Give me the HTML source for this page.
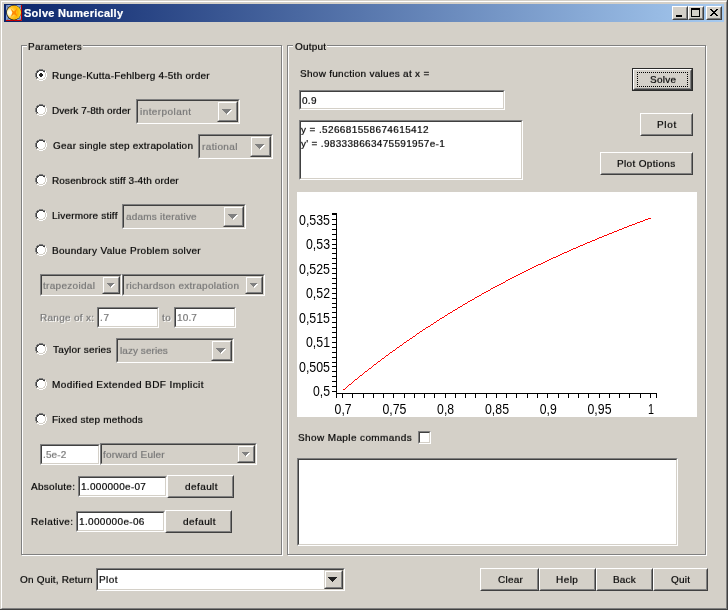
<!DOCTYPE html><html><head><meta charset="utf-8"><title>Solve Numerically</title><style>
html,body{margin:0;padding:0;}
body{width:728px;height:610px;overflow:hidden;background:#d4d0c8;font-family:"Liberation Sans",sans-serif;font-size:10px;color:#000;position:relative;}
.a{position:absolute;white-space:nowrap;}
.t{position:absolute;white-space:pre;line-height:12px;height:12px;-webkit-text-stroke:0.2px currentColor;will-change:transform;}
.s{transform:scaleY(0.875);transform-origin:0 9px;}
.dis{color:#767676;}
.emb{color:#767676;text-shadow:1px 1px 0 #fff;}
.grp{position:absolute;border:1px solid #808080;box-shadow:1px 1px 0 #fff, inset 1px 1px 0 #fff;box-sizing:border-box;}
.grplab{position:absolute;background:#d4d0c8;height:12px;}
.sunk{position:absolute;box-sizing:border-box;border:1px solid;border-color:#808080 #fff #fff #808080;background:#fff;}
.sunk:before{content:"";position:absolute;left:0;top:0;right:0;bottom:0;border:1px solid;border-color:#404040 #d4d0c8 #d4d0c8 #404040;}
.sunk.g{background:#d4d0c8;}
.btn{position:absolute;box-sizing:border-box;border:1px solid;border-color:#fff #404040 #404040 #fff;background:#d4d0c8;}
.btn:before{content:"";position:absolute;left:0;top:0;right:0;bottom:0;border:1px solid;border-color:#d4d0c8 #808080 #808080 #d4d0c8;}
.cbtn{position:absolute;box-sizing:border-box;border:1px solid;border-color:#d4d0c8 #404040 #404040 #d4d0c8;background:#d4d0c8;}
.cbtn:before{content:"";position:absolute;left:0;top:0;right:0;bottom:0;border:1px solid;border-color:#fff #808080 #808080 #fff;}
.radio{position:absolute;width:12px;height:12px;}
</style></head><body>
<div class="a" style="left:0;top:0;width:727px;height:609px;border-right:1px solid #404040;border-bottom:1px solid #404040;"></div>
<div class="a" style="left:1px;top:1px;width:726px;height:608px;border:1px solid;border-color:#fff #808080 #808080 #fff;box-sizing:border-box;"></div>
<div class="a" style="left:4px;top:4px;width:720px;height:18px;background:linear-gradient(to right,#0a246a,#a6caf0);"></div>
<svg class="a" style="left:6px;top:5px" width="16" height="16" viewBox="0 0 16 16"><defs><radialGradient id="ig" cx="0.2" cy="0.5" r="0.8"><stop offset="0" stop-color="#ffffff"/><stop offset="0.22" stop-color="#fff6c0"/><stop offset="0.45" stop-color="#ffc830"/><stop offset="0.7" stop-color="#ffb400"/><stop offset="1" stop-color="#f4dc30"/></radialGradient></defs><rect x="0" y="0" width="16" height="16" fill="#86a3dc"/><path d="M0 0L16 16M16 0L0 16" stroke="#6f7f9c" stroke-width="1.2"/><path d="M15.5 0V15.5H0" stroke="#c80000" stroke-width="1" fill="none"/><circle cx="7.7" cy="7.6" r="7.6" fill="#1a1a1a"/><circle cx="8" cy="7.6" r="7.1" fill="url(#ig)"/><path d="M4.6 3.4L8 6.4 11.2 3.2 9.8 7.6 11.6 11.6 8 9.2 4.8 12 6.4 7.6z" fill="#ff8a00"/></svg>
<div class="t " style="left:23.76px;top:7px;letter-spacing:0.268px;font-size:11px;line-height:13px;height:13px;font-weight:bold;color:#fff;">Solve Numerically</div>
<div class="btn" style="left:672px;top:6px;width:16px;height:14px;">
<div class="a" style="left:3px;top:8px;width:6px;height:2px;background:#000"></div>
</div>
<div class="btn" style="left:688px;top:6px;width:16px;height:14px;">
<div class="a" style="left:2px;top:1px;width:9px;height:9px;box-sizing:border-box;border:1px solid #000;border-top-width:2px;"></div>
</div>
<div class="btn" style="left:706px;top:6px;width:16px;height:14px;">
<svg class="a" style="left:3px;top:2px" width="8" height="7" viewBox="0 0 8 7" shape-rendering="crispEdges"><path d="M0 0h2v1h-2zM6 0h2v1h-2zM1 1h2v1h-2zM5 1h2v1h-2zM2 2h4v1h-4zM3 3h2v1h-2zM2 4h4v1h-4zM1 5h2v1h-2zM5 5h2v1h-2zM0 6h2v1h-2zM6 6h2v1h-2z" fill="#000"/></svg>
</div>
<div class="grp" style="left:21px;top:45px;width:261px;height:510px;"></div>
<div class="grplab" style="left:27px;top:39px;width:56px;"></div>
<div class="t s" style="left:28.40px;top:41px;letter-spacing:0.226px;">Parameters</div>
<div class="grp" style="left:287px;top:45px;width:419px;height:510px;"></div>
<div class="grplab" style="left:293px;top:39px;width:34px;"></div>
<div class="t s" style="left:294.71px;top:41px;letter-spacing:0.212px;">Output</div>
<svg class="radio" style="left:35px;top:69px" viewBox="0 0 12 12" shape-rendering="crispEdges"><path d="M4 0h4v1h-4zM2 1h2v1h-2zM8 1h2v1h-2zM1 2h1v1h-1zM1 3h1v1h-1zM0 4h1v1h-1zM0 5h1v1h-1zM0 6h1v1h-1zM0 7h1v1h-1zM1 8h1v1h-1zM1 9h1v1h-1z" fill="#808080"/><path d="M4 1h4v1h-4zM2 2h2v1h-2zM8 2h2v1h-2zM2 3h1v1h-1zM1 4h1v1h-1zM1 5h1v1h-1zM1 6h1v1h-1zM1 7h1v1h-1zM2 8h1v1h-1z" fill="#404040"/><path d="M4 2h4v1h-4zM10 2h1v1h-1zM3 3h6v1h-6zM10 3h1v1h-1zM2 4h8v1h-8zM11 4h1v1h-1zM2 5h8v1h-8zM11 5h1v1h-1zM2 6h8v1h-8zM11 6h1v1h-1zM2 7h8v1h-8zM11 7h1v1h-1zM3 8h6v1h-6zM10 8h1v1h-1zM4 9h4v1h-4zM10 9h1v1h-1zM2 10h2v1h-2zM8 10h2v1h-2zM4 11h4v1h-4z" fill="#ffffff"/><path d="M9 3h1v1h-1zM10 4h1v1h-1zM10 5h1v1h-1zM10 6h1v1h-1zM10 7h1v1h-1zM9 8h1v1h-1zM2 9h2v1h-2zM8 9h2v1h-2zM4 10h4v1h-4z" fill="#d4d0c8"/><path d="M5 4h2v1h-2zM4 5h4v1h-4zM4 6h4v1h-4zM5 7h2v1h-2z" fill="#202020"/></svg>
<div class="t s" style="left:52.40px;top:70px;letter-spacing:0.227px;">Runge-Kutta-Fehlberg 4-5th order</div>
<svg class="radio" style="left:35px;top:104px" viewBox="0 0 12 12" shape-rendering="crispEdges"><path d="M4 0h4v1h-4zM2 1h2v1h-2zM8 1h2v1h-2zM1 2h1v1h-1zM1 3h1v1h-1zM0 4h1v1h-1zM0 5h1v1h-1zM0 6h1v1h-1zM0 7h1v1h-1zM1 8h1v1h-1zM1 9h1v1h-1z" fill="#808080"/><path d="M4 1h4v1h-4zM2 2h2v1h-2zM8 2h2v1h-2zM2 3h1v1h-1zM1 4h1v1h-1zM1 5h1v1h-1zM1 6h1v1h-1zM1 7h1v1h-1zM2 8h1v1h-1z" fill="#404040"/><path d="M4 2h4v1h-4zM10 2h1v1h-1zM3 3h6v1h-6zM10 3h1v1h-1zM2 4h8v1h-8zM11 4h1v1h-1zM2 5h8v1h-8zM11 5h1v1h-1zM2 6h8v1h-8zM11 6h1v1h-1zM2 7h8v1h-8zM11 7h1v1h-1zM3 8h6v1h-6zM10 8h1v1h-1zM4 9h4v1h-4zM10 9h1v1h-1zM2 10h2v1h-2zM8 10h2v1h-2zM4 11h4v1h-4z" fill="#ffffff"/><path d="M9 3h1v1h-1zM10 4h1v1h-1zM10 5h1v1h-1zM10 6h1v1h-1zM10 7h1v1h-1zM9 8h1v1h-1zM2 9h2v1h-2zM8 9h2v1h-2zM4 10h4v1h-4z" fill="#d4d0c8"/></svg>
<div class="t s" style="left:52.40px;top:105px;letter-spacing:0.054px;">Dverk 7-8th order</div>
<svg class="radio" style="left:35px;top:139px" viewBox="0 0 12 12" shape-rendering="crispEdges"><path d="M4 0h4v1h-4zM2 1h2v1h-2zM8 1h2v1h-2zM1 2h1v1h-1zM1 3h1v1h-1zM0 4h1v1h-1zM0 5h1v1h-1zM0 6h1v1h-1zM0 7h1v1h-1zM1 8h1v1h-1zM1 9h1v1h-1z" fill="#808080"/><path d="M4 1h4v1h-4zM2 2h2v1h-2zM8 2h2v1h-2zM2 3h1v1h-1zM1 4h1v1h-1zM1 5h1v1h-1zM1 6h1v1h-1zM1 7h1v1h-1zM2 8h1v1h-1z" fill="#404040"/><path d="M4 2h4v1h-4zM10 2h1v1h-1zM3 3h6v1h-6zM10 3h1v1h-1zM2 4h8v1h-8zM11 4h1v1h-1zM2 5h8v1h-8zM11 5h1v1h-1zM2 6h8v1h-8zM11 6h1v1h-1zM2 7h8v1h-8zM11 7h1v1h-1zM3 8h6v1h-6zM10 8h1v1h-1zM4 9h4v1h-4zM10 9h1v1h-1zM2 10h2v1h-2zM8 10h2v1h-2zM4 11h4v1h-4z" fill="#ffffff"/><path d="M9 3h1v1h-1zM10 4h1v1h-1zM10 5h1v1h-1zM10 6h1v1h-1zM10 7h1v1h-1zM9 8h1v1h-1zM2 9h2v1h-2zM8 9h2v1h-2zM4 10h4v1h-4z" fill="#d4d0c8"/></svg>
<div class="t s" style="left:52.67px;top:140px;letter-spacing:0.246px;">Gear single step extrapolation</div>
<svg class="radio" style="left:35px;top:174px" viewBox="0 0 12 12" shape-rendering="crispEdges"><path d="M4 0h4v1h-4zM2 1h2v1h-2zM8 1h2v1h-2zM1 2h1v1h-1zM1 3h1v1h-1zM0 4h1v1h-1zM0 5h1v1h-1zM0 6h1v1h-1zM0 7h1v1h-1zM1 8h1v1h-1zM1 9h1v1h-1z" fill="#808080"/><path d="M4 1h4v1h-4zM2 2h2v1h-2zM8 2h2v1h-2zM2 3h1v1h-1zM1 4h1v1h-1zM1 5h1v1h-1zM1 6h1v1h-1zM1 7h1v1h-1zM2 8h1v1h-1z" fill="#404040"/><path d="M4 2h4v1h-4zM10 2h1v1h-1zM3 3h6v1h-6zM10 3h1v1h-1zM2 4h8v1h-8zM11 4h1v1h-1zM2 5h8v1h-8zM11 5h1v1h-1zM2 6h8v1h-8zM11 6h1v1h-1zM2 7h8v1h-8zM11 7h1v1h-1zM3 8h6v1h-6zM10 8h1v1h-1zM4 9h4v1h-4zM10 9h1v1h-1zM2 10h2v1h-2zM8 10h2v1h-2zM4 11h4v1h-4z" fill="#ffffff"/><path d="M9 3h1v1h-1zM10 4h1v1h-1zM10 5h1v1h-1zM10 6h1v1h-1zM10 7h1v1h-1zM9 8h1v1h-1zM2 9h2v1h-2zM8 9h2v1h-2zM4 10h4v1h-4z" fill="#d4d0c8"/></svg>
<div class="t s" style="left:52.40px;top:175px;letter-spacing:0.128px;">Rosenbrock stiff 3-4th order</div>
<svg class="radio" style="left:35px;top:209px" viewBox="0 0 12 12" shape-rendering="crispEdges"><path d="M4 0h4v1h-4zM2 1h2v1h-2zM8 1h2v1h-2zM1 2h1v1h-1zM1 3h1v1h-1zM0 4h1v1h-1zM0 5h1v1h-1zM0 6h1v1h-1zM0 7h1v1h-1zM1 8h1v1h-1zM1 9h1v1h-1z" fill="#808080"/><path d="M4 1h4v1h-4zM2 2h2v1h-2zM8 2h2v1h-2zM2 3h1v1h-1zM1 4h1v1h-1zM1 5h1v1h-1zM1 6h1v1h-1zM1 7h1v1h-1zM2 8h1v1h-1z" fill="#404040"/><path d="M4 2h4v1h-4zM10 2h1v1h-1zM3 3h6v1h-6zM10 3h1v1h-1zM2 4h8v1h-8zM11 4h1v1h-1zM2 5h8v1h-8zM11 5h1v1h-1zM2 6h8v1h-8zM11 6h1v1h-1zM2 7h8v1h-8zM11 7h1v1h-1zM3 8h6v1h-6zM10 8h1v1h-1zM4 9h4v1h-4zM10 9h1v1h-1zM2 10h2v1h-2zM8 10h2v1h-2zM4 11h4v1h-4z" fill="#ffffff"/><path d="M9 3h1v1h-1zM10 4h1v1h-1zM10 5h1v1h-1zM10 6h1v1h-1zM10 7h1v1h-1zM9 8h1v1h-1zM2 9h2v1h-2zM8 9h2v1h-2zM4 10h4v1h-4z" fill="#d4d0c8"/></svg>
<div class="t s" style="left:52.40px;top:210px;letter-spacing:0.200px;">Livermore stiff</div>
<svg class="radio" style="left:35px;top:244px" viewBox="0 0 12 12" shape-rendering="crispEdges"><path d="M4 0h4v1h-4zM2 1h2v1h-2zM8 1h2v1h-2zM1 2h1v1h-1zM1 3h1v1h-1zM0 4h1v1h-1zM0 5h1v1h-1zM0 6h1v1h-1zM0 7h1v1h-1zM1 8h1v1h-1zM1 9h1v1h-1z" fill="#808080"/><path d="M4 1h4v1h-4zM2 2h2v1h-2zM8 2h2v1h-2zM2 3h1v1h-1zM1 4h1v1h-1zM1 5h1v1h-1zM1 6h1v1h-1zM1 7h1v1h-1zM2 8h1v1h-1z" fill="#404040"/><path d="M4 2h4v1h-4zM10 2h1v1h-1zM3 3h6v1h-6zM10 3h1v1h-1zM2 4h8v1h-8zM11 4h1v1h-1zM2 5h8v1h-8zM11 5h1v1h-1zM2 6h8v1h-8zM11 6h1v1h-1zM2 7h8v1h-8zM11 7h1v1h-1zM3 8h6v1h-6zM10 8h1v1h-1zM4 9h4v1h-4zM10 9h1v1h-1zM2 10h2v1h-2zM8 10h2v1h-2zM4 11h4v1h-4z" fill="#ffffff"/><path d="M9 3h1v1h-1zM10 4h1v1h-1zM10 5h1v1h-1zM10 6h1v1h-1zM10 7h1v1h-1zM9 8h1v1h-1zM2 9h2v1h-2zM8 9h2v1h-2zM4 10h4v1h-4z" fill="#d4d0c8"/></svg>
<div class="t s" style="left:52.40px;top:245px;letter-spacing:0.314px;">Boundary Value Problem solver</div>
<svg class="radio" style="left:35px;top:343px" viewBox="0 0 12 12" shape-rendering="crispEdges"><path d="M4 0h4v1h-4zM2 1h2v1h-2zM8 1h2v1h-2zM1 2h1v1h-1zM1 3h1v1h-1zM0 4h1v1h-1zM0 5h1v1h-1zM0 6h1v1h-1zM0 7h1v1h-1zM1 8h1v1h-1zM1 9h1v1h-1z" fill="#808080"/><path d="M4 1h4v1h-4zM2 2h2v1h-2zM8 2h2v1h-2zM2 3h1v1h-1zM1 4h1v1h-1zM1 5h1v1h-1zM1 6h1v1h-1zM1 7h1v1h-1zM2 8h1v1h-1z" fill="#404040"/><path d="M4 2h4v1h-4zM10 2h1v1h-1zM3 3h6v1h-6zM10 3h1v1h-1zM2 4h8v1h-8zM11 4h1v1h-1zM2 5h8v1h-8zM11 5h1v1h-1zM2 6h8v1h-8zM11 6h1v1h-1zM2 7h8v1h-8zM11 7h1v1h-1zM3 8h6v1h-6zM10 8h1v1h-1zM4 9h4v1h-4zM10 9h1v1h-1zM2 10h2v1h-2zM8 10h2v1h-2zM4 11h4v1h-4z" fill="#ffffff"/><path d="M9 3h1v1h-1zM10 4h1v1h-1zM10 5h1v1h-1zM10 6h1v1h-1zM10 7h1v1h-1zM9 8h1v1h-1zM2 9h2v1h-2zM8 9h2v1h-2zM4 10h4v1h-4z" fill="#d4d0c8"/></svg>
<div class="t s" style="left:52.87px;top:344px;letter-spacing:0.184px;">Taylor series</div>
<svg class="radio" style="left:35px;top:378px" viewBox="0 0 12 12" shape-rendering="crispEdges"><path d="M4 0h4v1h-4zM2 1h2v1h-2zM8 1h2v1h-2zM1 2h1v1h-1zM1 3h1v1h-1zM0 4h1v1h-1zM0 5h1v1h-1zM0 6h1v1h-1zM0 7h1v1h-1zM1 8h1v1h-1zM1 9h1v1h-1z" fill="#808080"/><path d="M4 1h4v1h-4zM2 2h2v1h-2zM8 2h2v1h-2zM2 3h1v1h-1zM1 4h1v1h-1zM1 5h1v1h-1zM1 6h1v1h-1zM1 7h1v1h-1zM2 8h1v1h-1z" fill="#404040"/><path d="M4 2h4v1h-4zM10 2h1v1h-1zM3 3h6v1h-6zM10 3h1v1h-1zM2 4h8v1h-8zM11 4h1v1h-1zM2 5h8v1h-8zM11 5h1v1h-1zM2 6h8v1h-8zM11 6h1v1h-1zM2 7h8v1h-8zM11 7h1v1h-1zM3 8h6v1h-6zM10 8h1v1h-1zM4 9h4v1h-4zM10 9h1v1h-1zM2 10h2v1h-2zM8 10h2v1h-2zM4 11h4v1h-4z" fill="#ffffff"/><path d="M9 3h1v1h-1zM10 4h1v1h-1zM10 5h1v1h-1zM10 6h1v1h-1zM10 7h1v1h-1zM9 8h1v1h-1zM2 9h2v1h-2zM8 9h2v1h-2zM4 10h4v1h-4z" fill="#d4d0c8"/></svg>
<div class="t s" style="left:52.40px;top:379px;letter-spacing:0.415px;">Modified Extended BDF Implicit</div>
<svg class="radio" style="left:35px;top:413px" viewBox="0 0 12 12" shape-rendering="crispEdges"><path d="M4 0h4v1h-4zM2 1h2v1h-2zM8 1h2v1h-2zM1 2h1v1h-1zM1 3h1v1h-1zM0 4h1v1h-1zM0 5h1v1h-1zM0 6h1v1h-1zM0 7h1v1h-1zM1 8h1v1h-1zM1 9h1v1h-1z" fill="#808080"/><path d="M4 1h4v1h-4zM2 2h2v1h-2zM8 2h2v1h-2zM2 3h1v1h-1zM1 4h1v1h-1zM1 5h1v1h-1zM1 6h1v1h-1zM1 7h1v1h-1zM2 8h1v1h-1z" fill="#404040"/><path d="M4 2h4v1h-4zM10 2h1v1h-1zM3 3h6v1h-6zM10 3h1v1h-1zM2 4h8v1h-8zM11 4h1v1h-1zM2 5h8v1h-8zM11 5h1v1h-1zM2 6h8v1h-8zM11 6h1v1h-1zM2 7h8v1h-8zM11 7h1v1h-1zM3 8h6v1h-6zM10 8h1v1h-1zM4 9h4v1h-4zM10 9h1v1h-1zM2 10h2v1h-2zM8 10h2v1h-2zM4 11h4v1h-4z" fill="#ffffff"/><path d="M9 3h1v1h-1zM10 4h1v1h-1zM10 5h1v1h-1zM10 6h1v1h-1zM10 7h1v1h-1zM9 8h1v1h-1zM2 9h2v1h-2zM8 9h2v1h-2zM4 10h4v1h-4z" fill="#d4d0c8"/></svg>
<div class="t s" style="left:52.40px;top:414px;letter-spacing:0.203px;">Fixed step methods</div>
<div class="sunk g" style="left:136px;top:99px;width:104px;height:25px;"></div>
<div class="cbtn" style="left:217px;top:101px;width:21px;height:21px;"></div>
<svg class="a" style="left:222px;top:109px" width="10" height="6" viewBox="0 0 10 6" shape-rendering="crispEdges"><path d="M0 0h9v1h-9zM1 1h7v1h-7zM2 2h5v1h-5zM3 3h3v1h-3zM4 4h1v1h-1z" fill="#fff" transform="translate(1,1)"/><path d="M0 0h9v1h-9zM1 1h7v1h-7zM2 2h5v1h-5zM3 3h3v1h-3zM4 4h1v1h-1z" fill="#808080"/></svg>
<div class="t s dis" style="left:139.59px;top:106px;letter-spacing:0.425px;">interpolant</div>
<div class="sunk g" style="left:198px;top:134px;width:75px;height:25px;"></div>
<div class="cbtn" style="left:250px;top:136px;width:21px;height:21px;"></div>
<svg class="a" style="left:255px;top:144px" width="10" height="6" viewBox="0 0 10 6" shape-rendering="crispEdges"><path d="M0 0h9v1h-9zM1 1h7v1h-7zM2 2h5v1h-5zM3 3h3v1h-3zM4 4h1v1h-1z" fill="#fff" transform="translate(1,1)"/><path d="M0 0h9v1h-9zM1 1h7v1h-7zM2 2h5v1h-5zM3 3h3v1h-3zM4 4h1v1h-1z" fill="#808080"/></svg>
<div class="t s dis" style="left:201.54px;top:141px;letter-spacing:0.375px;">rational</div>
<div class="sunk g" style="left:122px;top:204px;width:124px;height:25px;"></div>
<div class="cbtn" style="left:223px;top:206px;width:21px;height:21px;"></div>
<svg class="a" style="left:228px;top:214px" width="10" height="6" viewBox="0 0 10 6" shape-rendering="crispEdges"><path d="M0 0h9v1h-9zM1 1h7v1h-7zM2 2h5v1h-5zM3 3h3v1h-3zM4 4h1v1h-1z" fill="#fff" transform="translate(1,1)"/><path d="M0 0h9v1h-9zM1 1h7v1h-7zM2 2h5v1h-5zM3 3h3v1h-3zM4 4h1v1h-1z" fill="#808080"/></svg>
<div class="t s dis" style="left:125.73px;top:211px;letter-spacing:0.203px;">adams iterative</div>
<div class="sunk g" style="left:40px;top:274px;width:82px;height:22px;"></div>
<div class="cbtn" style="left:102px;top:276px;width:18px;height:18px;"></div>
<svg class="a" style="left:107px;top:283px" width="8" height="5" viewBox="0 0 8 5" shape-rendering="crispEdges"><path d="M0 0h7v1h-7zM1 1h5v1h-5zM2 2h3v1h-3zM3 3h1v1h-1z" fill="#fff" transform="translate(1,1)"/><path d="M0 0h7v1h-7zM1 1h5v1h-5zM2 2h3v1h-3zM3 3h1v1h-1z" fill="#808080"/></svg>
<div class="t s dis" style="left:43.44px;top:280px;letter-spacing:0.300px;">trapezoidal</div>
<div class="sunk g" style="left:122px;top:274px;width:143px;height:22px;"></div>
<div class="cbtn" style="left:245px;top:276px;width:18px;height:18px;"></div>
<svg class="a" style="left:250px;top:283px" width="8" height="5" viewBox="0 0 8 5" shape-rendering="crispEdges"><path d="M0 0h7v1h-7zM1 1h5v1h-5zM2 2h3v1h-3zM3 3h1v1h-1z" fill="#fff" transform="translate(1,1)"/><path d="M0 0h7v1h-7zM1 1h5v1h-5zM2 2h3v1h-3zM3 3h1v1h-1z" fill="#808080"/></svg>
<div class="t s dis" style="left:125.54px;top:280px;letter-spacing:0.272px;">richardson extrapolation</div>
<div class="t s emb" style="left:40.40px;top:312px;letter-spacing:0.283px;">Range of x:</div>
<div class="sunk" style="left:97px;top:307px;width:62px;height:21px;"></div>
<div class="t s dis" style="left:100.32px;top:312px;letter-spacing:0.701px;">.7</div>
<div class="t s emb" style="left:162.44px;top:312px;letter-spacing:0.355px;">to</div>
<div class="sunk" style="left:174px;top:307px;width:62px;height:21px;"></div>
<div class="t s dis" style="left:177.43px;top:312px;letter-spacing:0.157px;">10.7</div>
<div class="sunk g" style="left:116px;top:338px;width:118px;height:25px;"></div>
<div class="cbtn" style="left:211px;top:340px;width:21px;height:21px;"></div>
<svg class="a" style="left:216px;top:348px" width="10" height="6" viewBox="0 0 10 6" shape-rendering="crispEdges"><path d="M0 0h9v1h-9zM1 1h7v1h-7zM2 2h5v1h-5zM3 3h3v1h-3zM4 4h1v1h-1z" fill="#fff" transform="translate(1,1)"/><path d="M0 0h9v1h-9zM1 1h7v1h-7zM2 2h5v1h-5zM3 3h3v1h-3zM4 4h1v1h-1z" fill="#808080"/></svg>
<div class="t s dis" style="left:119.55px;top:345px;letter-spacing:0.053px;">lazy series</div>
<div class="sunk" style="left:40px;top:444px;width:60px;height:21px;"></div>
<div class="t s dis" style="left:43.32px;top:449px;letter-spacing:0.105px;">.5e-2</div>
<div class="sunk g" style="left:100px;top:443px;width:157px;height:22px;"></div>
<div class="cbtn" style="left:237px;top:445px;width:18px;height:18px;"></div>
<svg class="a" style="left:242px;top:452px" width="8" height="5" viewBox="0 0 8 5" shape-rendering="crispEdges"><path d="M0 0h7v1h-7zM1 1h5v1h-5zM2 2h3v1h-3zM3 3h1v1h-1z" fill="#fff" transform="translate(1,1)"/><path d="M0 0h7v1h-7zM1 1h5v1h-5zM2 2h3v1h-3zM3 3h1v1h-1z" fill="#808080"/></svg>
<div class="t s dis" style="left:103.44px;top:449px;letter-spacing:0.179px;">forward Euler</div>
<div class="t s" style="left:31.30px;top:481px;letter-spacing:0.279px;">Absolute:</div>
<div class="sunk" style="left:78px;top:476px;width:89px;height:21px;"></div>
<div class="t s" style="left:81.43px;top:481px;letter-spacing:0.292px;">1.000000e-07</div>
<div class="btn" style="left:167px;top:475px;width:67px;height:23px;"></div>
<div class="t s" style="left:184.74px;top:481px;letter-spacing:0.419px;">default</div>
<div class="t s" style="left:31.00px;top:516px;letter-spacing:0.393px;">Relative:</div>
<div class="sunk" style="left:76px;top:511px;width:89px;height:21px;"></div>
<div class="t s" style="left:79.43px;top:516px;letter-spacing:0.334px;">1.000000e-06</div>
<div class="btn" style="left:165px;top:510px;width:67px;height:23px;"></div>
<div class="t s" style="left:182.74px;top:516px;letter-spacing:0.419px;">default</div>
<div class="t s" style="left:19.71px;top:574px;letter-spacing:0.186px;">On Quit, Return</div>
<div class="sunk" style="left:96px;top:568px;width:249px;height:23px;"></div>
<div class="cbtn" style="left:324px;top:570px;width:19px;height:19px;"></div>
<svg class="a" style="left:328px;top:577px" width="10" height="6" viewBox="0 0 10 6" shape-rendering="crispEdges"><path d="M0 0h9v1h-9zM1 1h7v1h-7zM2 2h5v1h-5zM3 3h3v1h-3zM4 4h1v1h-1z" fill="#202020"/></svg>
<div class="t s" style="left:99.40px;top:574px;letter-spacing:0.443px;">Plot</div>
<div class="t s" style="left:299.51px;top:68px;letter-spacing:0.278px;">Show function values at x =</div>
<div class="sunk" style="left:299px;top:90px;width:206px;height:20px;"></div>
<div class="t s" style="left:301.77px;top:95px;letter-spacing:0.277px;">0.9</div>
<div class="sunk" style="left:299px;top:120px;width:224px;height:60px;"></div>
<div class="t s" style="left:301.49px;top:124px;letter-spacing:0.375px;">y = .526681558674615412</div>
<div class="t s" style="left:301.49px;top:138px;letter-spacing:0.310px;">y' = .983338663475591957e-1</div>
<div class="a" style="left:632px;top:68px;width:61px;height:23px;box-sizing:border-box;border:1px solid #2a2a2a;"></div>
<div class="btn" style="left:633px;top:69px;width:59px;height:21px;">
<div class="a" style="left:3px;top:2px;right:3px;bottom:2px;border:1px dotted #000;"></div></div>
<div class="t s" style="left:649.51px;top:74px;letter-spacing:0.291px;">Solve</div>
<div class="btn" style="left:640px;top:113px;width:53px;height:23px;"></div>
<div class="t s" style="left:657.40px;top:119px;letter-spacing:0.658px;">Plot</div>
<div class="btn" style="left:600px;top:152px;width:93px;height:23px;"></div>
<div class="t s" style="left:617.40px;top:158px;letter-spacing:0.343px;">Plot Options</div>
<svg class="a" style="left:297px;top:192px;will-change:transform" width="400" height="225" viewBox="297 192 400 225" font-family="Liberation Sans, sans-serif" font-size="14">
<rect x="297" y="192" width="400" height="225" fill="#fff"/>
<g stroke="#000" stroke-width="1" shape-rendering="crispEdges" fill="none"><path d="M336.5 213V398M336 393.5H657"/><path d="M342.5 394V398M352.5 394V398M363.5 394V398M373.5 394V398M383.5 394V398M393.5 394V398M404.5 394V398M414.5 394V398M424.5 394V398M434.5 394V398M445.5 394V398M455.5 394V398M465.5 394V398M475.5 394V398M486.5 394V398M496.5 394V398M506.5 394V398M516.5 394V398M527.5 394V398M537.5 394V398M547.5 394V398M558.5 394V398M568.5 394V398M578.5 394V398M588.5 394V398M599.5 394V398M609.5 394V398M619.5 394V398M629.5 394V398M640.5 394V398M650.5 394V398M656.5 394V398M332 391.5H336M332 386.5H336M332 381.5H336M332 376.5H336M332 371.5H336M332 366.5H336M332 362.5H336M332 357.5H336M332 352.5H336M332 347.5H336M332 342.5H336M332 337.5H336M332 332.5H336M332 327.5H336M332 322.5H336M332 317.5H336M332 312.5H336M332 307.5H336M332 303.5H336M332 298.5H336M332 293.5H336M332 288.5H336M332 283.5H336M332 278.5H336M332 273.5H336M332 268.5H336M332 263.5H336M332 258.5H336M332 253.5H336M332 248.5H336M332 244.5H336M332 239.5H336M332 234.5H336M332 229.5H336M332 224.5H336M332 219.5H336M332 214.5H336M332 213.5H336"/></g>
<text x="334.6" y="414" textLength="17" lengthAdjust="spacingAndGlyphs">0,7</text>
<text x="382.4" y="414" textLength="24" lengthAdjust="spacingAndGlyphs">0,75</text>
<text x="437.1" y="414" textLength="17" lengthAdjust="spacingAndGlyphs">0,8</text>
<text x="485.0" y="414" textLength="24" lengthAdjust="spacingAndGlyphs">0,85</text>
<text x="539.8" y="414" textLength="17" lengthAdjust="spacingAndGlyphs">0,9</text>
<text x="587.5" y="414" textLength="24" lengthAdjust="spacingAndGlyphs">0,95</text>
<text x="647.9" y="414" textLength="6" lengthAdjust="spacingAndGlyphs">1</text>
<text x="313" y="396" textLength="17" lengthAdjust="spacingAndGlyphs">0,5</text>
<text x="299" y="372" textLength="31" lengthAdjust="spacingAndGlyphs">0,505</text>
<text x="306" y="347" textLength="24" lengthAdjust="spacingAndGlyphs">0,51</text>
<text x="299" y="323" textLength="31" lengthAdjust="spacingAndGlyphs">0,515</text>
<text x="306" y="298" textLength="24" lengthAdjust="spacingAndGlyphs">0,52</text>
<text x="299" y="274" textLength="31" lengthAdjust="spacingAndGlyphs">0,525</text>
<text x="306" y="249" textLength="24" lengthAdjust="spacingAndGlyphs">0,53</text>
<text x="299" y="225" textLength="31" lengthAdjust="spacingAndGlyphs">0,535</text>
<path d="M343 389h2v1h-2zM345 388h1v1h-1zM346 387h1v1h-1zM347 386h1v1h-1zM348 385h1v1h-1zM349 384h2v1h-2zM351 383h1v1h-1zM352 382h1v1h-1zM353 381h1v1h-1zM354 380h1v1h-1zM355 379h2v1h-2zM357 378h1v1h-1zM358 377h1v1h-1zM359 376h1v1h-1zM360 375h2v1h-2zM362 374h1v1h-1zM363 373h1v1h-1zM364 372h1v1h-1zM365 371h2v1h-2zM367 370h1v1h-1zM368 369h1v1h-1zM369 368h2v1h-2zM371 367h1v1h-1zM372 366h1v1h-1zM373 365h1v1h-1zM374 364h2v1h-2zM376 363h1v1h-1zM377 362h1v1h-1zM378 361h2v1h-2zM380 360h1v1h-1zM381 359h1v1h-1zM382 358h2v1h-2zM384 357h1v1h-1zM385 356h1v1h-1zM386 355h2v1h-2zM388 354h1v1h-1zM389 353h1v1h-1zM390 352h2v1h-2zM392 351h1v1h-1zM393 350h2v1h-2zM395 349h1v1h-1zM396 348h1v1h-1zM397 347h2v1h-2zM399 346h1v1h-1zM400 345h2v1h-2zM402 344h1v1h-1zM403 343h1v1h-1zM404 342h2v1h-2zM406 341h1v1h-1zM407 340h2v1h-2zM409 339h1v1h-1zM410 338h2v1h-2zM412 337h1v1h-1zM413 336h2v1h-2zM415 335h1v1h-1zM416 334h1v1h-1zM417 333h2v1h-2zM419 332h1v1h-1zM420 331h2v1h-2zM422 330h1v1h-1zM423 329h2v1h-2zM425 328h1v1h-1zM426 327h2v1h-2zM428 326h2v1h-2zM430 325h1v1h-1zM431 324h2v1h-2zM433 323h1v1h-1zM434 322h2v1h-2zM436 321h1v1h-1zM437 320h2v1h-2zM439 319h1v1h-1zM440 318h2v1h-2zM442 317h2v1h-2zM444 316h1v1h-1zM445 315h2v1h-2zM447 314h1v1h-1zM448 313h2v1h-2zM450 312h2v1h-2zM452 311h1v1h-1zM453 310h2v1h-2zM455 309h2v1h-2zM457 308h1v1h-1zM458 307h2v1h-2zM460 306h2v1h-2zM462 305h1v1h-1zM463 304h2v1h-2zM465 303h2v1h-2zM467 302h1v1h-1zM468 301h2v1h-2zM470 300h2v1h-2zM472 299h2v1h-2zM474 298h1v1h-1zM475 297h2v1h-2zM477 296h2v1h-2zM479 295h2v1h-2zM481 294h1v1h-1zM482 293h2v1h-2zM484 292h2v1h-2zM486 291h2v1h-2zM488 290h2v1h-2zM490 289h1v1h-1zM491 288h2v1h-2zM493 287h2v1h-2zM495 286h2v1h-2zM497 285h2v1h-2zM499 284h2v1h-2zM501 283h2v1h-2zM503 282h2v1h-2zM505 281h1v1h-1zM506 280h2v1h-2zM508 279h2v1h-2zM510 278h2v1h-2zM512 277h2v1h-2zM514 276h2v1h-2zM516 275h2v1h-2zM518 274h2v1h-2zM520 273h2v1h-2zM522 272h2v1h-2zM524 271h2v1h-2zM526 270h2v1h-2zM528 269h2v1h-2zM530 268h2v1h-2zM532 267h2v1h-2zM534 266h2v1h-2zM536 265h2v1h-2zM538 264h3v1h-3zM541 263h2v1h-2zM543 262h2v1h-2zM545 261h2v1h-2zM547 260h2v1h-2zM549 259h2v1h-2zM551 258h2v1h-2zM553 257h3v1h-3zM556 256h2v1h-2zM558 255h2v1h-2zM560 254h2v1h-2zM562 253h2v1h-2zM564 252h3v1h-3zM567 251h2v1h-2zM569 250h2v1h-2zM571 249h2v1h-2zM573 248h3v1h-3zM576 247h2v1h-2zM578 246h2v1h-2zM580 245h3v1h-3zM583 244h2v1h-2zM585 243h2v1h-2zM587 242h3v1h-3zM590 241h2v1h-2zM592 240h3v1h-3zM595 239h2v1h-2zM597 238h2v1h-2zM599 237h3v1h-3zM602 236h2v1h-2zM604 235h3v1h-3zM607 234h2v1h-2zM609 233h3v1h-3zM612 232h2v1h-2zM614 231h3v1h-3zM617 230h2v1h-2zM619 229h3v1h-3zM622 228h2v1h-2zM624 227h3v1h-3zM627 226h2v1h-2zM629 225h3v1h-3zM632 224h3v1h-3zM635 223h2v1h-2zM637 222h3v1h-3zM640 221h3v1h-3zM643 220h2v1h-2zM645 219h3v1h-3zM648 218h3v1h-3z" fill="#ff0000" shape-rendering="crispEdges"/>
</svg>
<div class="t s" style="left:297.51px;top:432px;letter-spacing:0.384px;">Show Maple commands</div>
<div class="sunk" style="left:418px;top:431px;width:13px;height:13px;"></div>
<div class="sunk" style="left:297px;top:458px;width:381px;height:88px;"></div>
<div class="btn" style="left:480px;top:568px;width:59px;height:23px;"></div>
<div class="t s" style="left:497.66px;top:574px;letter-spacing:0.236px;">Clear</div>
<div class="btn" style="left:539px;top:568px;width:57px;height:23px;"></div>
<div class="t s" style="left:555.90px;top:574px;letter-spacing:0.442px;">Help</div>
<div class="btn" style="left:596px;top:568px;width:57px;height:23px;"></div>
<div class="t s" style="left:613.40px;top:574px;letter-spacing:0.167px;">Back</div>
<div class="btn" style="left:653px;top:568px;width:55px;height:23px;"></div>
<div class="t s" style="left:671.19px;top:574px;letter-spacing:0.267px;">Quit</div>
</body></html>
